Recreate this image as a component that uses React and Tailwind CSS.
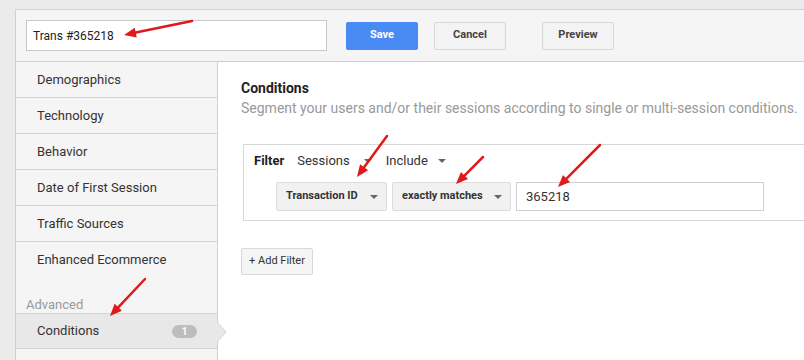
import React from "react";

function Caret({ className = "" }) {
  return (
    <svg width="8" height="4" viewBox="0 0 8 4" className={className} aria-hidden="true">
      <path d="M0 0 L8 0 L4 4 Z" fill="#666" />
    </svg>
  );
}

function SideItem({ label, active, badge }) {
  return (
    <div
      className={
        "relative flex h-[36px] items-center border-b border-[#d4d4d4] pl-[21px] pr-[20px] text-[13px] text-[#333] " +
        (active ? "bg-[#e8e8e8] border-t" : "")
      }
    >
      <span className="flex-1">{label}</span>
      {badge ? (
        <span className="flex h-[13px] w-[25px] items-center justify-center rounded-full bg-[#bdbdbd] text-[10px] font-bold text-white">
          {badge}
        </span>
      ) : null}
      {active ? (
        <svg width="10" height="20" viewBox="0 0 10 20" className="absolute right-[-10px] top-[8px]" aria-hidden="true">
          <path d="M0 0 L9 10 L0 20 Z" fill="#e8e8e8" stroke="#d0d0d0" />
          <path d="M0 1 L0 19" stroke="#e8e8e8" strokeWidth="2" />
        </svg>
      ) : null}
    </div>
  );
}

function Arrows() {
  const lines = [
    [192, 21, 124, 35],
    [387, 136, 357, 177],
    [483, 157, 456, 184],
    [600, 145, 558, 187],
    [145, 279, 110, 316],
  ];
  return (
    <svg width="804" height="360" className="pointer-events-none absolute left-0 top-0" aria-hidden="true">
      {lines.map(([x1, y1, x2, y2], i) => {
        const a = Math.atan2(y2 - y1, x2 - x1);
        const len = 12;
        const w = 5;
        const bx = x2 - len * Math.cos(a);
        const by = y2 - len * Math.sin(a);
        const px = -Math.sin(a) * w;
        const py = Math.cos(a) * w;
        return (
          <g key={i}>
            <line x1={x1} y1={y1} x2={bx} y2={by} stroke="#e0191b" strokeWidth="2.5" strokeLinecap="round" />
            <path d={`M${x2} ${y2} L${bx + px} ${by + py} L${bx - px} ${by - py} Z`} fill="#e0191b" />
          </g>
        );
      })}
    </svg>
  );
}

export default function App() {
  return (
    <div
      className="relative h-[360px] w-[804px] overflow-hidden bg-[#ebebeb] pl-[15px] pt-[9px]"
      style={{ fontFamily: "Roboto, Arial, sans-serif" }}
    >
      <div className="flex h-full w-[820px] flex-col border-l border-t border-[#d0d0d0] bg-[#f5f5f5]">
        <div className="flex h-[52px] shrink-0 items-center border-b border-[#cfcfcf] pl-[10px]">
          <div className="flex h-[31px] w-[301px] items-center border border-[#c8c8c8] bg-white pl-[6px] text-[12px] text-[#222]">
            Trans #365218
          </div>
          <button className="ml-[19px] h-[28px] w-[72px] rounded-[2px] bg-[#4a8af4] text-[11px] font-bold text-white">
            Save
          </button>
          <button className="ml-[16px] h-[28px] w-[72px] rounded-[2px] border border-[#d8d8d8] bg-[#f3f3f3] text-[11px] font-bold text-[#444]">
            Cancel
          </button>
          <button className="ml-[36px] h-[28px] w-[72px] rounded-[2px] border border-[#d8d8d8] bg-[#f3f3f3] text-[11px] font-bold text-[#444]">
            Preview
          </button>
        </div>
        <div className="flex flex-1">
          <div className="w-[202px] shrink-0 border-r border-[#d0d0d0]">
            <SideItem label="Demographics" />
            <SideItem label="Technology" />
            <SideItem label="Behavior" />
            <SideItem label="Date of First Session" />
            <SideItem label="Traffic Sources" />
            <div className="flex h-[36px] items-center pl-[21px] text-[13px] text-[#333]">Enhanced Ecommerce</div>
            <div className="flex h-[35px] items-end pb-[1px] pl-[10px] text-[13px] leading-[14px] text-[#999]">Advanced</div>
            <SideItem label="Conditions" active badge="1" />
            <div className="h-[20px] border-b border-[#d4d4d4]" />
          </div>
          <div className="flex-1 bg-white pl-[23px] pt-[16px]">
            <div className="text-[14px] font-bold leading-[20px] text-[#222]">Conditions</div>
            <div className="text-[14px] leading-[21px] text-[#999]">
              Segment your users and/or their sessions according to single or multi-session conditions.
            </div>
            <div className="ml-[2px] mt-[25px] h-[77px] w-[600px] border border-[#d8d8d8] pl-[10px] pt-[7px]">
              <div className="flex h-[17px] items-center text-[13px] text-[#333]">
                <span className="font-bold text-[#222]">Filter</span>
                <span className="ml-[13px]">Sessions</span>
                <Caret className="ml-[14px]" />
                <span className="ml-[14px]">Include</span>
                <Caret className="ml-[10px]" />
              </div>
              <div className="ml-[22px] mt-[13px] flex items-center">
                <div className="flex h-[29px] w-[111px] items-center justify-between rounded-[2px] border border-[#dcdcdc] bg-[#f1f1f1] pl-[9px] pr-[8px] text-[11px] font-bold text-[#333]">
                  Transaction ID
                  <Caret />
                </div>
                <div className="ml-[5px] flex h-[29px] w-[119px] items-center justify-between rounded-[2px] border border-[#dcdcdc] bg-[#f1f1f1] pl-[9px] pr-[8px] text-[11px] font-bold text-[#333]">
                  exactly matches
                  <Caret />
                </div>
                <div className="ml-[5px] flex h-[29px] w-[248px] items-center border border-[#d0d0d0] bg-white pl-[9px] text-[13px] text-[#333]">
                  365218
                </div>
              </div>
            </div>
            <button className="mt-[27px] flex h-[27px] w-[72px] items-center justify-center rounded-[2px] border border-[#d8d8d8] bg-[#f5f5f5] text-[11px] text-[#333]">
              + Add Filter
            </button>
          </div>
        </div>
      </div>
      <Arrows />
    </div>
  );
}
